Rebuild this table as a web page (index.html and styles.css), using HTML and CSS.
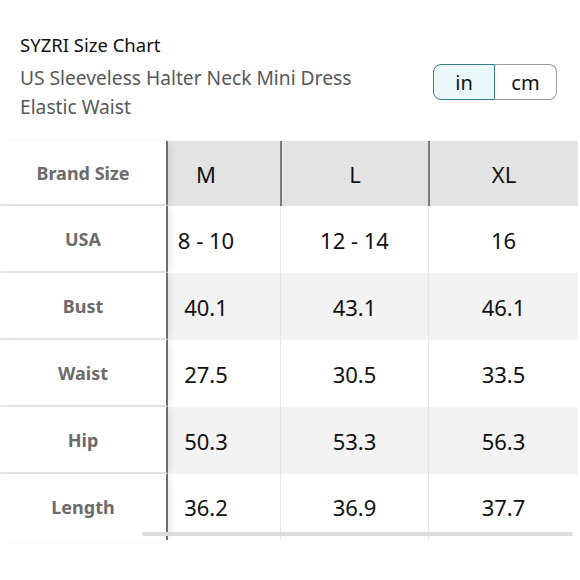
FILE: index.html
```html
<!DOCTYPE html>
<html lang="en">
<head>
<meta charset="utf-8">
<title>SYZRI Size Chart</title>
<link rel="stylesheet" href="styles.css">
</head>
<body>
<div class="page">
  <header class="head">
    <div class="titles">
      <div class="brand">SYZRI Size Chart</div>
      <div class="product">US Sleeveless Halter Neck Mini Dress<br>Elastic Waist</div>
    </div>
    <div class="toggle">
      <span class="seg on">in</span>
      <span class="seg">cm</span>
    </div>
  </header>

  <div class="table-wrap">
    <div class="chart">
      <div class="lab hdr">Brand Size</div>
      <div class="cell hdr first">M</div>
      <div class="cell hdr">L</div>
      <div class="cell hdr">XL</div>

      <div class="lab">USA</div>
      <div class="cell first">8 - 10</div>
      <div class="cell">12 - 14</div>
      <div class="cell">16</div>

      <div class="lab">Bust</div>
      <div class="cell first alt">40.1</div>
      <div class="cell alt">43.1</div>
      <div class="cell alt">46.1</div>

      <div class="lab">Waist</div>
      <div class="cell first">27.5</div>
      <div class="cell">30.5</div>
      <div class="cell">33.5</div>

      <div class="lab">Hip</div>
      <div class="cell first alt">50.3</div>
      <div class="cell alt">53.3</div>
      <div class="cell alt">56.3</div>

      <div class="lab last">Length</div>
      <div class="cell first">36.2</div>
      <div class="cell">36.9</div>
      <div class="cell">37.7</div>
    </div>
    <div class="scrollbar"></div>
  </div>
</div>
</body>
</html>
```

FILE: styles.css
```css
* { box-sizing: border-box; }

html, body {
  margin: 0;
  padding: 0;
  background: #ffffff;
}

body {
  font-family: "Noto Sans", "Open Sans", Arial, sans-serif;
  color: #0f1111;
}

.page {
  width: 580px;
  height: 580px;
  overflow: hidden;
}

.head {
  display: flex;
  justify-content: space-between;
  align-items: flex-start;
  padding: 33px 23px 0 20px;
}

.brand {
  font-size: 18.5px;
  line-height: 24px;
  color: #0f1111;
}

.product {
  margin-top: 6px;
  font-size: 19.2px;
  line-height: 29px;
  color: #565959;
}

.toggle {
  display: flex;
  margin-top: 31px;
  height: 36px;
}

.seg {
  width: 62px;
  display: flex;
  align-items: center;
  justify-content: center;
  font-size: 20px;
  color: #0f1111;
  border: 1px solid #9a9a9a;
  background: #ffffff;
}

.seg.on {
  border: 1.5px solid #357f84;
  background: #eaf8fa;
  border-radius: 8px 0 0 8px;
}

.seg:last-child {
  border-left: none;
  border-radius: 0 8px 8px 0;
}

.table-wrap {
  position: relative;
  margin-top: 20px;
}

.chart {
  display: grid;
  grid-template-columns: 168px 112px 148px 150px;
  grid-template-rows: 65px 67px 67px 67px 67px 66px;
}

.lab {
  display: flex;
  align-items: center;
  justify-content: center;
  font-weight: 700;
  font-size: 18px;
  color: #6b6b6b;
  background: #ffffff;
  border-bottom: 2px solid #e6e6e6;
  border-right: 2px solid #6e6e6e;
  box-shadow: 5px 0 8px -3px rgba(0, 0, 0, 0.10);
  position: relative;
  z-index: 1;
}

.lab.last {
  border-bottom: none;
}

.cell {
  display: flex;
  align-items: center;
  justify-content: center;
  font-size: 22px;
  color: #0f1111;
  background: #ffffff;
  border-left: 1px solid #e6e6e6;
}

.cell.first {
  border-left: none;
  padding-right: 36px;
}

.cell.alt {
  background: #f3f3f3;
}

.cell.hdr {
  background: #e3e3e3;
  border-left: 2px solid #7a7a7a;
}

.cell.hdr.first {
  border-left: none;
}

.scrollbar {
  position: absolute;
  left: 142px;
  width: 431px;
  bottom: 4px;
  height: 4px;
  border-radius: 2px;
  background: #dcdcdc;
  z-index: 2;
}
```
